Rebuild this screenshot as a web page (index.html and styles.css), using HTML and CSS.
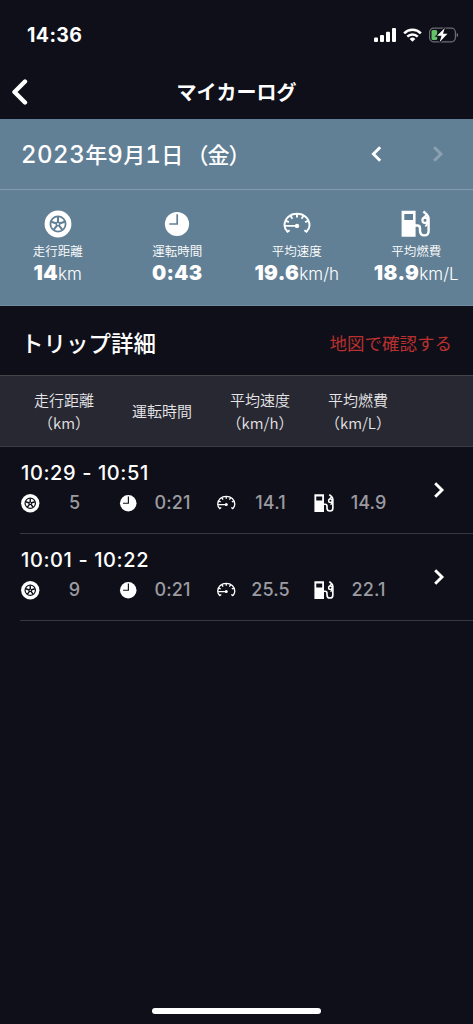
FILE: index.html
```html
<!DOCTYPE html>
<html lang="ja">
<head>
<meta charset="utf-8">
<meta name="viewport" content="width=device-width, initial-scale=1">
<title>マイカーログ</title>
<link rel="stylesheet" href="styles.css">
</head>
<body>
<svg class="sprite" aria-hidden="true">
  <symbol id="tire" viewBox="0 0 30 30">
    <circle cx="15" cy="15" r="13.4" fill="currentColor"/>
    <g fill="none" stroke="var(--cut)">
      <circle cx="15" cy="15" r="7.6" stroke-width="1.8"/>
      <path stroke-width="2.1" d="M15 15V8M15 15l6.7-2.2M15 15l4.1 5.7M15 15l-4.1 5.7M15 15l-6.7-2.2"/>
    </g>
    <circle cx="15" cy="15" r="2.4" fill="var(--cut)"/>
    <circle cx="15" cy="15" r="1" fill="currentColor"/>
  </symbol>
  <symbol id="clock" viewBox="0 0 30 30">
    <circle cx="15" cy="15" r="12.1" fill="currentColor"/>
    <path d="M15.200 5.300V15H7.300" fill="none" stroke="var(--cut)" stroke-width="1.7"/>
  </symbol>
  <symbol id="gauge" viewBox="0 0 30 30">
    <g fill="none" stroke="currentColor" stroke-width="1.9">
      <path d="M5.500 22.600C3.200 20.400 2.500 18.600 2.500 16.400C2.500 9.600 8.100 4.800 15 4.800s12.500 4.800 12.500 11.600c0 2.200-.7 4-3 6.200"/>
      <path d="M15 5v3.500M8.700 7.100l1.700 2.600M4 11.800l2.900 1.300M21.300 7.100l-1.700 2.600M26 11.800l-2.900 1.300M4.800 23.200l2.800-2M25.200 23.200l-2.800-2M3 16.900h12"/>
    </g>
    <circle cx="15" cy="16.900" r="2.200" fill="currentColor"/>
  </symbol>
  <symbol id="pump" viewBox="0 0 30 30">
    <path fill="currentColor" fill-rule="evenodd" d="M.6 1.800h14v26H.6zM3.300 5v6h8.700V5z"/>
    <g fill="none" stroke="currentColor">
      <path stroke-width="2.400" d="M14 16.500h2.400c2 0 2.600 1 2.600 2.700v2.300c0 3.300 1.600 4.900 4.300 4.900s4.300-1.600 4.300-4.500V9.500c0-2-.8-3-2.200-4.500l-3-2.500"/>
      <path stroke-width="2" d="M26 5.500l-3.700 3.800"/>
      <circle cx="24" cy="11.300" r="2.600" stroke-width="2.200"/>
      <path stroke-width="1.800" d="M27 13.500l-2.600 4"/>
    </g>
  </symbol>
  <symbol id="left" viewBox="0 0 12 18"><path d="M10.200 2.200L3.400 9l6.800 6.800" fill="none" stroke="currentColor" stroke-width="2.900"/></symbol>
  <symbol id="right" viewBox="0 0 12 18"><path d="M2.200 2.200L9 9l-6.800 6.800" fill="none" stroke="currentColor" stroke-width="2.900"/></symbol>
</svg>
<div class="screen">
  <div class="status">
    <span class="time">14:36</span>
    <svg class="signal" viewBox="0 0 22 14" fill="currentColor"><rect y="9.500" width="4" height="4.500" rx="1"/><rect x="6" y="7" width="4" height="7" rx="1"/><rect x="12" y="3.800" width="4" height="10.200" rx="1"/><rect x="18" y="0" width="4" height="14" rx="1"/></svg>
    <svg class="wifi" viewBox="0 0 20 14"><g fill="none" stroke="currentColor" stroke-width="2.600"><path d="M1.200 5.200a12.500 12.500 0 0 1 17.600 0M4.500 8.700a7.800 7.800 0 0 1 11 0"/></g><path d="M7 11.200a4.300 4.300 0 0 1 6 0L10 14z" fill="currentColor"/></svg>
    <svg class="battery" viewBox="0 0 30 16"><rect x=".6" y="1.200" width="25.800" height="13.600" rx="4" fill="none" stroke="#6c6c73" stroke-width="1.200"/><path d="M27.700 5.800c2 .8 2 3.600 0 4.400z" fill="#77777d"/><rect x="2.500" y="3" width="5.700" height="10" rx="1.600" fill="#62c466"/><path d="M15.800 1L8 8.800h4.500L10.700 15l7.800-8.300H14z" fill="#fff" stroke="#0f0f19" stroke-width="2" paint-order="stroke"/></svg>
  </div>
  <header class="nav">
    <svg class="back" viewBox="0 0 16 26"><path d="M13.500 2.500L3 13l10.500 10.500" fill="none" stroke="currentColor" stroke-width="4.400" stroke-linecap="round" stroke-linejoin="round"/></svg>
    <h1>マイカーログ</h1>
  </header>
  <section class="summary">
    <div class="date-row">
      <h2><b>2023</b>年<b>9</b>月<b>1</b>日<span class="paren">（</span>金<span class="paren-end">）</span></h2>
      <svg class="chev"><use href="#left"/></svg>
      <svg class="chev off"><use href="#right"/></svg>
    </div>
    <div class="stats">
      <div class="stat"><svg class="big"><use href="#tire"/></svg><span class="label">走行距離</span><span class="num"><b>14</b>km</span></div>
      <div class="stat"><svg class="big"><use href="#clock"/></svg><span class="label">運転時間</span><span class="num"><b class="clock-num">0:43</b></span></div>
      <div class="stat"><svg class="big"><use href="#gauge"/></svg><span class="label">平均速度</span><span class="num"><b>19.6</b>km/h</span></div>
      <div class="stat"><svg class="big"><use href="#pump"/></svg><span class="label">平均燃費</span><span class="num"><b>18.9</b>km/L</span></div>
    </div>
  </section>
  <div class="trip-head"><h2>トリップ詳細</h2><a class="map">地図で確認する</a></div>
  <div class="cols">
    <span>走行距離<br>（km）</span><span>運転時間</span><span>平均速度<br>（km/h）</span><span>平均燃費<br>（km/L）</span>
  </div>
  <div class="trip">
    <div class="trip-body">
      <div class="range">10:29 - 10:51</div>
      <div class="vals">
        <div><svg><use href="#tire"/></svg><span>5</span></div>
        <div><svg><use href="#clock"/></svg><span>0:21</span></div>
        <div><svg><use href="#gauge"/></svg><span>14.1</span></div>
        <div><svg><use href="#pump"/></svg><span>14.9</span></div>
      </div>
    </div>
    <svg class="chev"><use href="#right"/></svg>
  </div>
  <div class="trip">
    <div class="trip-body">
      <div class="range">10:01 - 10:22</div>
      <div class="vals">
        <div><svg><use href="#tire"/></svg><span>9</span></div>
        <div><svg><use href="#clock"/></svg><span>0:21</span></div>
        <div><svg><use href="#gauge"/></svg><span>25.5</span></div>
        <div><svg><use href="#pump"/></svg><span>22.1</span></div>
      </div>
    </div>
    <svg class="chev"><use href="#right"/></svg>
  </div>
  <div class="home"></div>
</div>
</body>
</html>
```
FILE: styles.css
```css
* { box-sizing: border-box; margin: 0; padding: 0; }
body { background: #0f0f19; }
.sprite { display: block; width: 0; height: 0; }
.screen {
  --cut: #0f0f19;
  width: 473px; height: 1024px; overflow: hidden;
  display: flex; flex-direction: column;
  background: #0f0f19; color: #fff;
  font-family: "Noto Sans CJK JP", sans-serif;
}
svg { flex: none; display: block; }
.status { height: 64px; padding: 6px 14px 0 27px; display: flex; align-items: center; }
.time { font: 700 19.5px/24px Inter, sans-serif; letter-spacing: .4px; margin-right: auto; }
.signal { width: 22px; height: 14px; margin-right: 7px; }
.wifi { width: 19px; height: 14px; margin-right: 7px; }
.battery { width: 30px; height: 16px; }
.nav { height: 55px; padding: 0 11px; display: grid; grid-template-columns: 16px 1fr 16px; align-items: center; }
.back { width: 17px; height: 26px; }
.nav h1 { font-size: 20px; line-height: 28px; font-weight: 700; text-align: center; }
.summary { --cut: #628095; background: #628095; height: 187px; border-bottom: 1px solid #718da1; }
.date-row { height: 71px; padding: 0 29px 0 21px; display: flex; align-items: center; border-bottom: 1px solid #829db0; }
.date-row h2 { font-size: 22px; line-height: 32px; font-weight: 500; margin-right: auto; white-space: nowrap; }
.date-row b { font-family: Inter, sans-serif; font-size: 24px; font-weight: 500; letter-spacing: .5px; font-feature-settings: "tnum"; }
.paren { margin-left: 3px; margin-right: -1px; }
.paren-end { margin-left: -1px; }
.chev { width: 12px; height: 18px; }
.off { margin-left: 50px; color: #8ba1b1; }
.stats { width: 478px; margin-left: -2px; display: grid; grid-template-columns: repeat(4, 1fr); padding-top: 19px; }
.stat { display: flex; flex-direction: column; align-items: center; }
.big { width: 30px; height: 30px; overflow: visible; }
.label { font-size: 12.5px; line-height: 20px; margin-top: 2px; font-weight: 350; }
.num { font: 300 17px/24px Inter, sans-serif; white-space: nowrap; }
.num b { font-size: 20.5px; font-weight: 900; letter-spacing: .4px; }
.num .clock-num { font-size: 20px; }
.trip-head { height: 69px; padding: 4px 21px 0 21px; display: flex; align-items: center; justify-content: space-between; }
.trip-head h2 { font-size: 22.500px; line-height: 30px; margin-top: -2px; font-weight: 500; }
.map { color: #b9302e; font-size: 17.500px; line-height: 26px; }
.cols { height: 72px; padding: 0 0 1px 15px; display: grid; grid-template-columns: repeat(4, 98px); align-items: center; text-align: center; background: #282832; border-top: 1px solid #444448; border-bottom: 1px solid #3b3b41; font-size: 15px; line-height: 23px; font-weight: 350; color: #e6e6e8; }
.trip { height: 87px; margin-left: 20px; padding: 13px 28px 0 1px; display: flex; border-bottom: 1px solid #38383e; }
.trip .chev { margin-top: 21px; margin-left: auto; }
.range { font: 500 20px/26px Inter, sans-serif; letter-spacing: .6px; }
.vals { display: grid; grid-template-columns: repeat(4, 98px); margin-top: 6px; margin-left: -1px; }
.vals div { display: flex; align-items: center; }
.vals svg { width: 20.5px; height: 20.5px; }
.vals span { width: 68px; text-align: center; font: 500 18px/22px Inter, sans-serif; letter-spacing: .1px; color: #9b9ba1; }
.home { width: 169px; height: 6px; margin: auto auto 10px; border-radius: 3px; background: #fff; }
```
